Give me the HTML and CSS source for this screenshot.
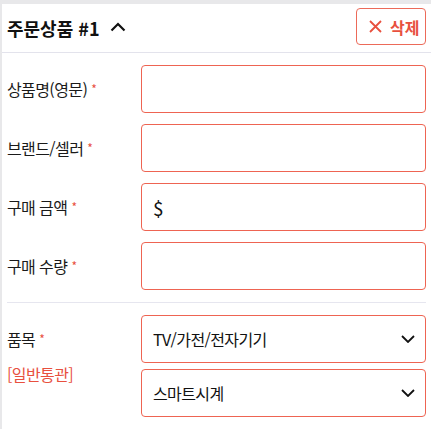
FILE: index.html
```html
<!DOCTYPE html>
<html lang="ko">
<head>
<meta charset="utf-8">
<link rel="stylesheet" href="styles.css">
</head>
<body>
<div class="card">
  <div class="header">
    <div class="title">
      <span>주문상품 #1</span>
      <svg class="chev-up" width="16" height="10" viewBox="0 0 16 10"><path d="M1.5 8.5 L8 2 L14.5 8.5" fill="none" stroke="#111" stroke-width="2.2"/></svg>
    </div>
    <button class="del">
      <svg width="13" height="13" viewBox="0 0 13 13"><path d="M1 1 L12 12 M12 1 L1 12" stroke="#e8503e" stroke-width="1.8" fill="none"/></svg>
      <span>삭제</span>
    </button>
  </div>
  <div class="section">
    <div class="row"><div class="label">상품명(영문)<span class="req">*</span></div><div class="field"></div></div>
    <div class="row"><div class="label">브랜드/셀러<span class="req">*</span></div><div class="field"></div></div>
    <div class="row"><div class="label">구매 금액<span class="req">*</span></div><div class="field"><span class="dollar">$</span></div></div>
    <div class="row"><div class="label">구매 수량<span class="req">*</span></div><div class="field"></div></div>
  </div>
  <div class="section cat">
    <div class="labels">
      <div class="label">품목<span class="req">*</span></div>
      <div class="label red">[일반통관]</div>
    </div>
    <div class="selects">
      <div class="field select"><span>TV/가전/전자기기</span><svg width="14" height="8" viewBox="0 0 14 8"><path d="M1 1 L7 7 L13 1" fill="none" stroke="#111" stroke-width="1.8"/></svg></div>
      <div class="field select"><span>스마트시계</span><svg width="14" height="8" viewBox="0 0 14 8"><path d="M1 1 L7 7 L13 1" fill="none" stroke="#111" stroke-width="1.8"/></svg></div>
    </div>
  </div>
</div>
</body>
</html>
```

FILE: styles.css
```css
* { box-sizing: border-box; }
html, body { margin: 0; padding: 0; }
body {
  background: #e8e8ea;
  font-family: "Noto Sans CJK KR", "Noto Sans", sans-serif;
  color: #1e1e1e;
  height: 429px;
  overflow: hidden;
}
.card {
  margin: 4px 0 0 2px;
  background: #fff;
  min-height: 425px;
}
.header {
  height: 49px;
  display: flex;
  align-items: center;
  justify-content: space-between;
  padding: 0 5px 0 5px;
  border-bottom: 1px solid #e3e3ec;
}
.title {
  display: flex;
  align-items: center;
  font-size: 18px;
  font-weight: 700;
  color: #111;
}
.chev-up { margin-left: 10px; margin-top: -2px; }
.del {
  display: flex;
  align-items: center;
  gap: 8px;
  height: 37px;
  width: 70px;
  margin-top: -3px;
  padding: 0 0 0 12px;
  background: #fff;
  border: 1px solid #ec6a59;
  border-radius: 4px;
  color: #e8503e;
  font-family: inherit;
  font-size: 16px;
  font-weight: 700;
}
.section {
  margin: 0 5px 0 5px;
  padding: 12px 0 12px;
  border-bottom: 1px solid #e6e6ef;
}
.row {
  display: grid;
  grid-template-columns: 134px 1fr;
  align-items: center;
  margin-bottom: 11px;
}
.row:last-child { margin-bottom: 0; }
.label {
  font-size: 16px;
  letter-spacing: -0.6px;
  line-height: 24px;
  color: #1a1a1a;
}
.req {
  color: #e8503e;
  font-size: 12px;
  margin-left: 4px;
  vertical-align: 2px;
}
.field {
  height: 48px;
  border: 1px solid #ee6452;
  border-radius: 4px;
  display: flex;
  align-items: center;
  padding: 0 11px;
}
.dollar { font-size: 19px; color: #111; }
.cat {
  display: grid;
  grid-template-columns: 134px 1fr;
}
.labels {
  display: flex;
  flex-direction: column;
  gap: 11px;
  padding-top: 12px;
}
.red { color: #e8503e; }
.selects {
  display: flex;
  flex-direction: column;
  gap: 6px;
}
.select {
  justify-content: space-between;
  font-size: 16px;
  letter-spacing: -0.6px;
  color: #111;
  padding-right: 10px;
}
```
